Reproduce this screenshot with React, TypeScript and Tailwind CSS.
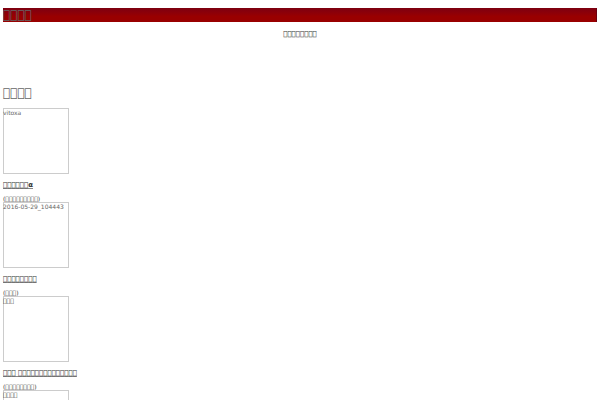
interface Entry {
  id: string;
  thumb: string;
  thumbClass: string;
  title?: string;
  author?: string;
}

// private-use characters, drawn as the font's empty box
const box = (count: number) => "\uE123".repeat(count);

const entries: Entry[] = [
  { id: "a", thumb: "vitoxa", thumbClass: "text-[#666]", title: `${box(6)}α`, author: `(${box(9)})` },
  { id: "b", thumb: "2016-05-29_104443", thumbClass: "text-[#666]", title: box(8), author: `(${box(3)})` },
  { id: "c", thumb: box(3), thumbClass: "text-[#333]", title: `${box(3)} ${box(14)}`, author: `(${box(8)})` },
  { id: "d", thumb: box(4), thumbClass: "text-[#333]" },
];

export default function App() {
  return (
    <div className="h-screen overflow-hidden bg-white px-[3px] pt-2 font-['DejaVu_Sans',sans-serif] text-[#333]">
      <header className="border-r border-[#6b0010] bg-linear-to-b from-[#7d0010] to-[#990000] to-60%">
        <h1 className="text-[12px] leading-[14px] text-[#666]">
          <a href="#top">{box(4)}</a>
        </h1>
      </header>
      <p className="mt-2 text-center text-[7px] leading-[9px]">{box(8)}</p>

      <h2 className="mt-12 text-[12px] leading-[12px] text-[#666]">{box(4)}</h2>
      <ul className="mt-[9px]">
        {entries.map((entry) => (
          <li key={entry.id}>
            <a href={`#${entry.id}`} className="block">
              <div className={`size-[66px] text-[6px] leading-[9px] inset-ring inset-ring-[#ccc] ${entry.thumbClass}`}>
                {entry.thumb}
              </div>
              {entry.title && (
                <h3 className="mt-[7px] mb-[5px] text-[7px] leading-[9px] font-bold underline decoration-[#888]">
                  {entry.title}
                </h3>
              )}
            </a>
            {entry.author && <p className="text-[6px] leading-[7px]">{entry.author}</p>}
          </li>
        ))}
      </ul>
    </div>
  );
}
